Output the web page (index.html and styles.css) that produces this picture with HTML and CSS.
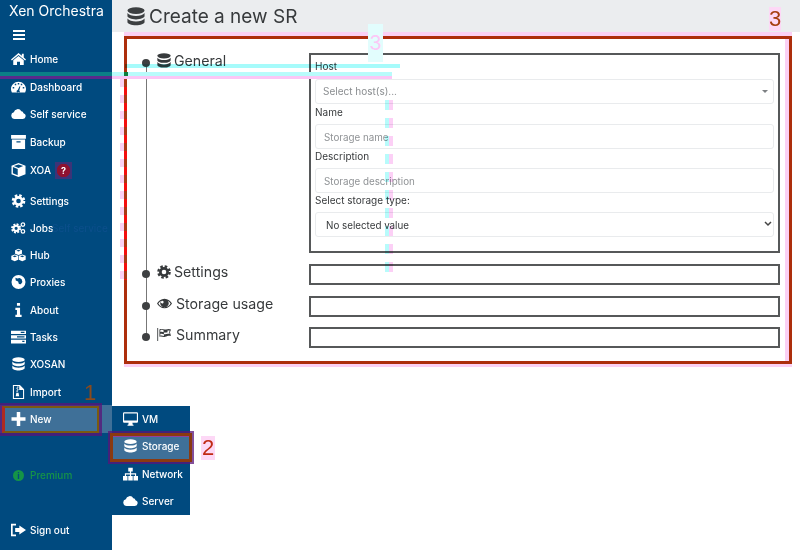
FILE: index.html
```html
<!DOCTYPE html>
<html lang="en">
<head>
<meta charset="utf-8">
<title>Create a new SR</title>
<link rel="stylesheet" href="styles.css">
</head>
<body>
<svg class="defs" width="0" height="0" aria-hidden="true">
  <symbol id="i-db" viewBox="0 0 20 24" preserveAspectRatio="none">
    <ellipse cx="10" cy="4.500" rx="9.500" ry="4.200"/>
    <path d="M.5 7.500c1.500 2.600 5.300 3.800 9.500 3.800s8-1.200 9.500-3.800v4c0 2.300-4.300 4.200-9.500 4.200S.5 13.800.5 11.500z"/>
    <path d="M.5 14.500c1.500 2.600 5.300 3.800 9.500 3.800s8-1.200 9.500-3.800v4.500c0 2.300-4.300 4.200-9.500 4.200S.5 21.300.5 19z"/>
  </symbol>
  <symbol id="i-cog" viewBox="0 0 20 20">
    <circle cx="10" cy="10" r="5.200" fill="none" stroke="currentColor" stroke-width="3.800"/>
    <circle cx="10" cy="10" r="8" fill="none" stroke="currentColor" stroke-width="3.400" stroke-dasharray="3.600 2.683"/>
  </symbol>
  <symbol id="i-home" viewBox="0 0 20 18">
    <path d="M10 1 0 9.500l1.200 1.400L10 3.500l8.800 7.400L20 9.500l-3-2.600V2h-2.500v2.800z"/>
    <path d="M10 5 3 10.800V17h5v-4.500h4V17h5v-6.200z"/>
  </symbol>
  <symbol id="i-gauge" viewBox="0 0 20 16">
    <path fill-rule="evenodd" d="M10 1C4.500 1 0 5.300 0 10.800c0 1.700.4 3.200 1.200 4.500h17.600c.8-1.300 1.200-2.800 1.200-4.500C20 5.300 15.500 1 10 1zM5 3.700h2v2H5zM9 2.700h2v2H9zM13 3.700h2v2h-2zM2.300 8h2v2h-2zM15.700 8h2v2h-2zM9 12l2.500-5 1 .4L11 12.500a2 2 0 1 1-2-.5z"/>
  </symbol>
  <symbol id="i-cloud" viewBox="0 0 24 16">
    <path d="M6 16a5.500 5.500 0 0 1-1.500-10.800A6.500 6.500 0 0 1 16.500 3.500 4 4 0 0 1 20 6.600 4.800 4.800 0 0 1 19 16z"/>
  </symbol>
  <symbol id="i-box" viewBox="0 0 18 17">
    <path fill-rule="evenodd" d="M0 0h18v4.500H0zM1 5.500h16V17H1zM6.500 7.500v1.600h5V7.500z"/>
  </symbol>
  <symbol id="i-cube" viewBox="0 0 18 18">
    <path fill-rule="evenodd" d="M9 0l9 3.500v11L9 18l-9-3.500v-11zM3 4l6 2.300L15 4 9 1.800zM1.800 5.300v8l6.200 2.600V7.800z"/>
  </symbol>
  <symbol id="i-jobs" viewBox="0 0 22 18">
    <circle cx="7.500" cy="9.500" r="3.800" fill="none" stroke="currentColor" stroke-width="3"/>
    <circle cx="7.500" cy="9.500" r="6" fill="none" stroke="currentColor" stroke-width="2.800" stroke-dasharray="2.800 1.912"/>
    <circle cx="17.500" cy="4" r="2.600" fill="none" stroke="currentColor" stroke-width="1.800"/>
    <circle cx="17.500" cy="14" r="2.600" fill="none" stroke="currentColor" stroke-width="1.800"/>
  </symbol>
  <symbol id="i-hub" viewBox="0 0 24 20">
    <path fill-rule="evenodd" d="M12 0l5.500 2.200v5.600L12 10 6.500 7.800V2.200zM8.500 3l3.500 1.400L15.500 3 12 1.700zM6 9l5.500 2.200v6.300L6 20 .5 17.500v-6.300zM2.500 12l3.500 1.400L9.500 12 6 10.700zM18 9l5.500 2.200v6.300L18 20l-5.500-2.500v-6.300zM14.500 12l3.500 1.400 3.500-1.400-3.500-1.300z"/>
  </symbol>
  <symbol id="i-globe" viewBox="0 0 18 18">
    <path fill-rule="evenodd" d="M9 0a9 9 0 1 1 0 18A9 9 0 0 1 9 0zM5 3.500l2.500 1 3-.5 2.500 1.500 1 3.500-2 3-2.500-.5-1-3-3-1.500z"/>
  </symbol>
  <symbol id="i-info" viewBox="0 0 8 18">
    <path d="M2 0h4v3.500H2zM0 6h6v9h2v3H0v-3h2V9H0z"/>
  </symbol>
  <symbol id="i-tasks" viewBox="0 0 20 17">
    <path fill-rule="evenodd" d="M0 0h20v4.500H0zM0 6h20v4.500H0zM0 12h20v5H0zM13 1.500v1.500h5V1.500zM8 7.500V9h10V7.500zM15 13.500V15h3v-1.500z"/>
  </symbol>
  <symbol id="i-file" viewBox="0 0 16 20">
    <path fill-rule="evenodd" d="M0 0h10l6 6v14H0zM1.500 1.500v17h13V7H9V1.500zM6 2h2v1.500H6zM5 4h2v1.500H5zM6 6h2v1.500H6zM5 8h2v1.500H5zM5 11h3l1 5H4z"/>
  </symbol>
  <symbol id="i-plus" viewBox="0 0 16 16">
    <path d="M6 0h4v6h6v4h-6v6H6v-6H0V6h6z"/>
  </symbol>
  <symbol id="i-desk" viewBox="0 0 20 18">
    <path fill-rule="evenodd" d="M1.500 0h17A1.500 1.500 0 0 1 20 1.500v11a1.500 1.500 0 0 1-1.500 1.500H12.500l.5 2.500h1v1.500H6v-1.500h1l.5-2.500h-6A1.500 1.500 0 0 1 0 12.500v-11A1.500 1.500 0 0 1 1.500 0zM1.500 1.500v9.500h17V1.500z"/>
  </symbol>
  <symbol id="i-map" viewBox="0 0 20 17">
    <path d="M7 0h6v5h-2.200v2.500h6.700V11H20v6h-6v-6h2V9h-5.200v2H13v6H7v-6h2.200V9H4v2h2v6H0v-6h2.500V7.500h6.700V5H7z"/>
  </symbol>
  <symbol id="i-out" viewBox="0 0 18 15">
    <path d="M6 0v2H2v11h4v2H0V0zM10 2l8 5.500-8 5.500V10H5V5h5z"/>
  </symbol>
  <symbol id="i-eye" viewBox="0 0 22 14">
    <path fill-rule="evenodd" d="M11 0c5 0 9 3.300 11 7-2 3.700-6 7-11 7S2 10.700 0 7c2-3.700 6-7 11-7zM2 7c1.800 3 5 5.500 9 5.500S18.200 10 20 7c-1-1.700-2.500-3.200-4.300-4.200a6 6 0 1 1-9.400 0C4.500 3.800 3 5.300 2 7zM9 3.500a2 2 0 1 0 0 3 2 2 0 0 0 0-3z"/>
  </symbol>
  <symbol id="i-flag" viewBox="0 0 20 18">
    <path fill-rule="evenodd" d="M0 0h1.200v18H0zM3 2c3-2 6 1 9 0s5-1 7 0l-1.500 4 1.500 5c-3-1-5 0-8 1s-5-1-8 0zM4.200 3v2.500c2-.7 3.500 0 5 .5V8.500c-1.500-.5-3-1-5-.5v2.700c2-.7 3.500 0 5 .4V8.500c2 .5 3.500 0 5.500-.5 1-.2 1.500-.2 2.500 0l-.8-2.200.8-2.300c-1-.2-2-.2-3 0V6c-1.800.3-3.500.7-5.500 0V3.200c-1.500-.5-3-1-4.500-.2z"/>
  </symbol>
</svg>

<div class="app">
  <nav class="sidebar">
    <div class="brand">Xen Orchestra</div>
    <div class="burger"><span></span><span></span><span></span></div>
    <a class="item"><svg class="ico"><use href="#i-home"/></svg>Home</a>
    <a class="item item-dash"><svg class="ico"><use href="#i-gauge"/></svg>Dashboard</a>
    <a class="item"><svg class="ico"><use href="#i-cloud"/></svg>Self service</a>
    <a class="item"><svg class="ico"><use href="#i-box"/></svg>Backup</a>
    <a class="item item-xoa"><svg class="ico"><use href="#i-cube"/></svg>XOA<span class="badge">?</span></a>
    <a class="item"><svg class="ico"><use href="#i-cog"/></svg>Settings</a>
    <a class="item"><svg class="ico"><use href="#i-jobs"/></svg>Jobs</a>
    <a class="item"><svg class="ico"><use href="#i-hub"/></svg>Hub</a>
    <a class="item"><svg class="ico"><use href="#i-globe"/></svg>Proxies</a>
    <a class="item"><svg class="ico"><use href="#i-info"/></svg>About</a>
    <a class="item"><svg class="ico"><use href="#i-tasks"/></svg>Tasks</a>
    <a class="item"><svg class="ico ico-db"><use href="#i-db"/></svg>XOSAN</a>
    <a class="item"><svg class="ico"><use href="#i-file"/></svg>Import</a>
    <a class="item item-active"><svg class="ico"><use href="#i-plus"/></svg>New</a>
    <a class="item item-premium"><span class="premium-dot">i</span>Premium</a>
    <a class="item item-out"><svg class="ico"><use href="#i-out"/></svg>Sign out</a>
    <div class="submenu">
      <a class="item"><svg class="ico"><use href="#i-desk"/></svg>VM</a>
      <a class="item item-active item-storage"><svg class="ico ico-db"><use href="#i-db"/></svg>Storage</a>
      <a class="item"><svg class="ico"><use href="#i-map"/></svg>Network</a>
      <a class="item"><svg class="ico"><use href="#i-cloud"/></svg>Server</a>
    </div>
  </nav>

  <main class="main">
    <header class="page-head">
      <svg class="head-ico"><use href="#i-db"/></svg>
      <h1 class="title">Create a new SR</h1>
    </header>

    <section class="wizard">
      <div class="rail"></div>
      <div class="step step-general">
        <div class="step-name"><svg class="step-ico step-ico-db"><use href="#i-db"/></svg>General</div>
        <div class="panel panel-form">
          <label class="field-label">Host</label>
          <div class="control control-host">Select host(s)...<span class="caret"></span></div>
          <label class="field-label">Name</label>
          <input class="control control-input" placeholder="Storage name">
          <label class="field-label">Description</label>
          <input class="control control-input" placeholder="Storage description">
          <label class="field-label">Select storage type:</label>
          <select class="control control-select"><option>No selected value</option></select>
        </div>
      </div>
      <div class="step">
        <div class="step-name"><svg class="step-ico"><use href="#i-cog"/></svg>Settings</div>
        <div class="panel"></div>
      </div>
      <div class="step">
        <div class="step-name"><svg class="step-ico step-ico-eye"><use href="#i-eye"/></svg>Storage usage</div>
        <div class="panel"></div>
      </div>
      <div class="step">
        <div class="step-name"><svg class="step-ico step-ico-flag"><use href="#i-flag"/></svg>Summary</div>
        <div class="panel"></div>
      </div>
    </section>
  </main>

  <div class="note note-line-a"></div>
  <div class="note note-line-b"></div>
  <div class="note note-line-c"></div>
  <div class="note note-stripes"></div>
  <div class="note note-left"></div>
  <div class="note note-ghost">3</div>
  <div class="note note-ghost-self">Self service</div>
  <div class="note note-box1"></div>
  <div class="note note-box2"></div>
  <div class="note note-num note-num1">1</div>
  <div class="note note-num note-num2">2</div>
  <div class="note note-num note-num3">3</div>
</div>
</body>
</html>
```
FILE: styles.css
```css
* { box-sizing: border-box; }
html, body { margin: 0; height: 100%; }
body { font-family: Inter, "Liberation Sans", sans-serif; background: #fff; color: #373a3c; overflow: hidden; }
.defs { position: absolute; }

.app { position: relative; display: flex; width: 800px; height: 550px; overflow: hidden; }

.sidebar { position: relative; flex: 0 0 112px; display: flex; flex-direction: column; background: #004a7f; color: #fff; }
.brand { height: 24px; padding: 2px 0 0 9px; font-size: 14px; line-height: 18px; white-space: nowrap; }
.burger { height: 21.500px; padding: 6px 0 0 13px; display: flex; flex-direction: column; gap: 2px; }
.burger span { width: 12px; height: 2px; background: #fff; }

.item { display: flex; align-items: center; height: 27.300px; padding-left: 11px; font-size: 10px; font-weight: 500; color: #fff; white-space: nowrap; flex: none; }
.ico { width: 15px; height: 14px; margin-right: 4px; fill: currentColor; flex: none; }
.ico-db { width: 13px; margin: 0 5px 0 1px; }
.item-dash { margin-top: .7px; }
.item-xoa { margin-top: .7px; margin-bottom: 3.500px; }
.item-active { background: #3f7098; }
.item-premium { margin-top: 29px; padding-left: 0; color: #159447; }
.premium-dot { width: 11px; height: 11px; margin: 0 6px 0 13px; border-radius: 50%; background: #159447; color: #004a7f; font-size: 9px; font-weight: 700; line-height: 11px; text-align: center; }
.item-out { margin-top: auto; margin-bottom: 6px; }
.badge { width: 17px; height: 17px; margin: 1px 0 0 4px; background: radial-gradient(circle, #8f1230 0 6.500px, #3c3478 7px); color: #fff; font-size: 9px; font-weight: 700; line-height: 17px; text-align: center; }

.submenu { position: absolute; left: 112px; top: 405.500px; width: 78px; background: #004a7f; }
.submenu .item { padding-left: 11px; }
.item-storage { box-shadow: inset 0 4px 0 #9040a0; }

.main { flex: 1; min-width: 0; display: flex; flex-direction: column; }
.page-head { display: flex; align-items: center; height: 32px; padding: 1px 0 0 15px; background: #ebedef; flex: none; }
.head-ico { width: 18px; height: 19px; margin-right: 4px; fill: #3c3f41; }
.title { margin: 0; font-size: 19px; font-weight: 400; line-height: 31px; color: #373a3c; }

.wizard { position: relative; width: 668px; height: 328px; margin: 4px 0 0 12px; padding: 13.500px 9.500px 0 30px;
  border: 3px solid #ad2e0c; box-shadow: 0 -4px 0 #fbd0f4, 0 3px 0 #fbd0f4, inset -4px 0 0 #fbd0f4; }
.rail { position: absolute; left: 18.500px; top: 24px; width: 1px; height: 274px; background: #777; }
.step { position: relative; display: flex; margin-bottom: 10.500px; }
.step::before { content: ""; position: absolute; left: -15px; top: 6px; width: 8px; height: 8px; border-radius: 50%; background: #3e4042; }
.step-name { flex: 0 0 152px; height: 21px; display: flex; align-items: center; font-size: 14.200px; line-height: 21px; color: #373a3c; margin-top: -3px; }
.step-ico { width: 14px; height: 14px; margin-right: 3px; fill: #373a3c; color: #373a3c; flex: none; }
.step-ico-db { height: 15px; }
.step-ico-eye { width: 15px; height: 11px; margin-right: 4px; }
.step-ico-flag { width: 15px; height: 13px; margin-right: 4px; }
.panel { flex: 1; height: 21px; border: 2px solid #565859; }
.panel-form { height: 200.500px; padding: 4px 4px 0; display: flex; flex-direction: column; }
.step-general { margin-bottom: 11px; }

.field-label { font-size: 10px; line-height: 14px; color: #373a3c; margin-bottom: 6px; }
.control { width: 100%; height: 25px; border: 1px solid #e9ebed; border-radius: 3px; background: #fff; font: 10px Inter, "Liberation Sans", sans-serif; color: #373a3c; outline: none; flex: none; }
.field-label + .control-input, .field-label + .control-select { margin-top: -1px; }
.control-host { position: relative; display: flex; align-items: center; padding-left: 7px; color: #8a8d90; margin-bottom: 1px; }
.control-input { padding: 2px 8px 0; margin-bottom: 0; font-size: 9.800px; }
.control-input::placeholder { color: #8f9295; opacity: 1; }
.control-select { padding: 2px 0 0 10px; font-size: 9.800px; appearance: none; -webkit-appearance: none;
  background: #fff url("data:image/svg+xml,%3Csvg xmlns='http://www.w3.org/2000/svg' width='8' height='6'%3E%3Cpath d='M1 1l3 3 3-3' fill='none' stroke='%23444' stroke-width='1.500'/%3E%3C/svg%3E") no-repeat right 1px center; }
.caret { position: absolute; right: 5px; top: 10px; width: 0; height: 0; border: 3px solid transparent; border-top: 3.500px solid #7d8083; border-bottom: 0; }

.note { position: absolute; pointer-events: none; }
.note-line-a { left: 125px; top: 64px; width: 275px; height: 4px; background: #a6fbfb; mix-blend-mode: multiply; }
.note-line-b { left: 0; top: 72px; width: 392px; height: 4px; background: linear-gradient(90deg, #0b7f86 0 112px, #b8fbfb 112px 124px, #0d7f40 124px 128px, #b8fbfb 128px); }
.note-line-c { left: 0; top: 76px; width: 392px; height: 3px; background: linear-gradient(90deg, #5a2a8c 0 112px, #fbc6f5 112px); }
.note-stripes { left: 385px; top: 100px; width: 8px; height: 172px;
  background: linear-gradient(90deg, #b8fbfb 0 4px, #fcd0f6 4px 8px);
  -webkit-mask: repeating-linear-gradient(180deg, #000 0 10px, transparent 10px 18px); mask: repeating-linear-gradient(180deg, #000 0 10px, transparent 10px 18px); mix-blend-mode: multiply; }
.note-left { left: 120px; top: 79px; width: 7px; height: 201px;
  background: repeating-linear-gradient(180deg, #fbd0f4 0 8px, #fff 8px 16px) 0 0 / 4px 100% no-repeat,
    repeating-linear-gradient(180deg, #a83a14 0 8px, #f50f0f 8px 16px) 4px 0 / 3px 100% no-repeat; }
.note-ghost { left: 368px; top: 24px; width: 15px; height: 38px; font: 20px/38px Inter, sans-serif; color: #fcc8f6; background: #e2fdfd; text-align: center; }
.note-ghost-self { left: 52px; top: 221px; font-size: 10px; line-height: 14px; color: #0c4f8c; white-space: nowrap; }
.note-box1 { left: 2px; top: 406px; width: 97px; height: 27px; border: 2px solid #7a5a10; border-left: 3px solid #b02a20; box-shadow: 0 0 0 3px rgba(90, 20, 120, .75); }
.note-box2 { left: 110px; top: 433px; width: 82px; height: 29px; border: 3px solid #8a3a10; box-shadow: 0 0 0 2px rgba(90, 20, 120, .75); }
.note-num { font: 22px/24px "Liberation Sans", sans-serif; }
.note-num1 { left: 84px; top: 381px; color: #8a4a1c; }
.note-num2 { left: 201px; top: 436px; color: #c02a14; background: #fdd8f6; padding: 0 1px; }
.note-num3 { left: 769px; top: 7px; color: #a63e10; background: #fdd8f6; }
```
